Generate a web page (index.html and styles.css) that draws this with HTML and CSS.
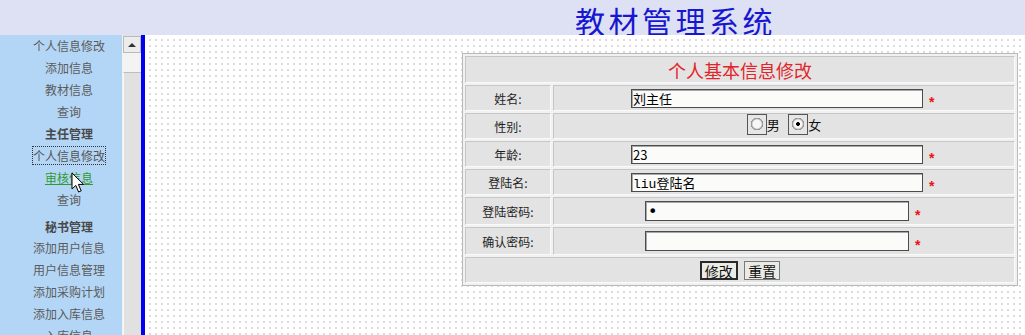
FILE: index.html
```html
<!DOCTYPE html>
<html lang="zh-CN">
<head>
<meta charset="utf-8">
<title>教材管理系统</title>
<link rel="stylesheet" href="styles.css">
</head>
<body>
<header class="header">
  <h1 class="title">教材管理系统</h1>
</header>
<div class="layout">
  <nav class="sidebar">
    <ul class="menu">
      <li class="item">个人信息修改</li>
      <li class="item">添加信息</li>
      <li class="item">教材信息</li>
      <li class="item">查询</li>
      <li class="item group">主任管理</li>
      <li class="item"><span class="focused">个人信息修改</span></li>
      <li class="item"><a class="link-active" href="#">审核信息</a></li>
      <li class="item">查询</li>
      <li class="item group group-gap">秘书管理</li>
      <li class="item">添加用户信息</li>
      <li class="item">用户信息管理</li>
      <li class="item">添加采购计划</li>
      <li class="item">添加入库信息</li>
      <li class="item">入库信息</li>
    </ul>
    <svg class="cursor" width="14" height="22" viewBox="0 0 14 22">
      <path d="M1 1 L1 17 L4.8 13.4 L7.6 20 L10.2 18.9 L7.4 12.4 L12.6 12.4 Z" fill="#fff" stroke="#000" stroke-width="1" stroke-linejoin="round"/>
    </svg>
  </nav>
  <div class="scrollbar">
    <div class="sb-up"><span class="sb-arrow"></span></div>
    <div class="sb-gap"></div>
    <div class="sb-track"></div>
  </div>
  <div class="divider"></div>
  <main class="content">
    <form class="form">
      <table class="form-table">
        <tr>
          <td class="caption" colspan="2">个人基本信息修改</td>
        </tr>
        <tr>
          <td class="label">姓名:</td>
          <td class="field"><input class="text" type="text" value="刘主任"><span class="req">*</span></td>
        </tr>
        <tr>
          <td class="label">性别:</td>
          <td class="field">
            <label class="choice"><input class="radio" type="radio" name="sex">男</label>
            <label class="choice"><input class="radio" type="radio" name="sex" checked>女</label>
          </td>
        </tr>
        <tr>
          <td class="label">年龄:</td>
          <td class="field"><input class="text" type="text" value="23"><span class="req">*</span></td>
        </tr>
        <tr>
          <td class="label">登陆名:</td>
          <td class="field"><input class="text mono" type="text" value="liu登陆名"><span class="req">*</span></td>
        </tr>
        <tr class="tall">
          <td class="label">登陆密码:</td>
          <td class="field"><input class="text pass" type="password" value="1"><span class="req">*</span></td>
        </tr>
        <tr class="tall">
          <td class="label">确认密码:</td>
          <td class="field"><input class="text pass" type="password" value=""><span class="req">*</span></td>
        </tr>
        <tr>
          <td class="actions" colspan="2">
            <button class="btn btn-default" type="submit">修改</button>
            <button class="btn" type="reset">重置</button>
          </td>
        </tr>
      </table>
    </form>
  </main>
</div>
</body>
</html>
```

FILE: styles.css
```css
* {
  box-sizing: border-box;
}

html, body {
  margin: 0;
  padding: 0;
  height: 335px;
  overflow: hidden;
}

body {
  font-family: "Noto Sans CJK SC", "Liberation Sans", sans-serif;
  font-size: 12px;
  color: #222;
  background: #fff;
}

.header {
  height: 35px;
  background: #dde1f3;
  overflow: visible;
}

.title {
  margin: 0;
  padding: 6px 0 0 575px;
  font-size: 30px;
  line-height: 29px;
  font-weight: normal;
  letter-spacing: 3.5px;
  color: #1717cf;
  white-space: nowrap;
}

.layout {
  display: flex;
  height: 300px;
}

.sidebar {
  position: relative;
  width: 122px;
  flex: none;
  background: #b4d6f6;
}

.menu {
  list-style: none;
  margin: 0;
  padding: 0 0 0 16px;
}

.item {
  height: 22px;
  line-height: 22px;
  text-align: center;
  color: #5b5b5b;
  white-space: nowrap;
}

.group {
  font-weight: bold;
  color: #484848;
}

.group-gap {
  margin-top: 6px;
  height: 20px;
  line-height: 20px;
}

.focused {
  outline: 1px dotted #333;
  outline-offset: 0;
  color: #555;
}

.link-active {
  color: #2f9a2f;
  text-decoration: underline;
}

.cursor {
  position: absolute;
  left: 71px;
  top: 137px;
}

.scrollbar {
  width: 19px;
  flex: none;
  display: flex;
  flex-direction: column;
  background: #e2e2e2;
  border-left: 1px solid #f2f2f2;
}

.sb-up {
  height: 17px;
  margin-top: 1px;
  background: #ececec;
  border: 1px solid #b9b9b9;
  display: flex;
  align-items: center;
  justify-content: center;
}

.sb-arrow {
  width: 0;
  height: 0;
  border-left: 4px solid transparent;
  border-right: 4px solid transparent;
  border-bottom: 4px solid #333;
}

.sb-gap {
  height: 19px;
  background: #f3f3f3;
}

.sb-track {
  flex: 1;
  background: #e1e1e1;
  border-top: 1px solid #bdbdbd;
  border-left: 1px solid #f7f7f7;
}

.divider {
  width: 4px;
  flex: none;
  background: #0000f2;
}

.content {
  flex: 1;
  padding: 18px 0 0 317px;
  background-color: #fff;
  background-image:
    linear-gradient(to right, #fff 4px, transparent 4px),
    linear-gradient(to bottom, #fff 4px, #dcdcdc 4px);
  background-size: 6px 6px;
}

.form {
  margin: 0;
}

.form-table {
  width: 556px;
  border-collapse: separate;
  border-spacing: 2px;
  border: 1px solid #b9b9b9;
  background: #f1f1f1;
}

.form-table td {
  padding: 0;
  height: 26px;
  background: #e3e3e3;
  border-top: 1px solid #c6c6c6;
  border-left: 1px solid #c6c6c6;
  border-bottom: 1px solid #fafafa;
  border-right: 1px solid #fafafa;
}

.form-table .caption {
  height: 27px;
  text-align: center;
  font-size: 18px;
  line-height: 24px;
  color: #e3252b;
}

.form-table .tall td {
  height: 28px;
}

.label {
  width: 86px;
  text-align: center;
  color: #1e1e1e;
}

.field {
  text-align: center;
  white-space: nowrap;
}

.text {
  width: 292px;
  height: 19px;
  margin: 0;
  padding: 0 1px;
  vertical-align: middle;
  border: 1px solid #4c4c4c;
  box-shadow: inset 1px 1px 0 #a8a8a8;
  background: #fbfbf9;
  font-family: "Noto Sans CJK SC", sans-serif;
  font-size: 13px;
  color: #000;
  outline: none;
}

.mono {
  font-family: "Liberation Mono", "Noto Sans CJK SC", monospace;
}

.pass {
  width: 264px;
  height: 20px;
  padding-left: 2px;
  font-family: "DejaVu Sans", sans-serif;
  font-size: 16px;
  line-height: 16px;
}

.req {
  display: inline-block;
  width: 8px;
  margin-left: 6px;
  color: #ee1111;
  font-family: "Liberation Sans", sans-serif;
  font-weight: bold;
  font-size: 14px;
  line-height: 14px;
  text-align: left;
  vertical-align: -5px;
}

.choice {
  display: inline-flex;
  align-items: center;
  margin: 0 3px;
  font-size: 13px;
  color: #111;
}

.radio {
  appearance: none;
  -webkit-appearance: none;
  width: 20px;
  height: 21px;
  margin: 0;
  border: 1px solid #555;
  background-color: #e6e6e6;
  background-image: radial-gradient(circle at 9px 9px, #f7f7f7 0 4px, #bdbdbd 5px, #888 6px, transparent 6.5px);
}

.radio:checked {
  background-image:
    radial-gradient(circle at 9px 9px, #000 0 1.6px, transparent 2.2px),
    radial-gradient(circle at 9px 9px, #f7f7f7 0 4px, #bdbdbd 5px, #888 6px, transparent 6.5px);
}

.actions {
  text-align: center;
}

.btn {
  height: 19px;
  margin: 0 2px;
  padding: 0 3px;
  vertical-align: middle;
  font-family: "Noto Sans CJK SC", sans-serif;
  font-size: 14px;
  line-height: 16px;
  color: #111;
  background: #ebebe6;
  border: 1px solid #7a7a7a;
  border-radius: 0;
}

.btn-default {
  border: 2px solid #2a2a2a;
}
```
